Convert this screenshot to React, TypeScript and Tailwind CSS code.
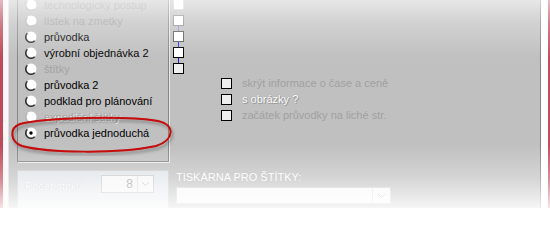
import React from 'react'

// ─── Small Win9x-style controls ───────────────────────────────────────────

function Radio({ checked, faint }: { checked?: boolean; faint?: boolean }) {
  return (
    <svg width="12" height="12" viewBox="0 0 12 12" className="shrink-0" aria-hidden="true">
      <circle cx="6" cy="6" r="5.5" fill="#fff" />
      <path d="M2.3 2.3A5.2 5.2 0 0 0 9.7 9.7" fill="none" stroke={faint ? '#b4b4b4' : '#303030'} strokeWidth="1.6" />
      {checked && <circle cx="6" cy="6" r="1.7" fill="#000" />}
    </svg>
  )
}

const reports = [
  { label: 'technologický postup', state: 'faint' },
  { label: 'lístek na zmetky', state: 'faint' },
  { label: 'průvodka', state: 'on' },
  { label: 'výrobní objednávka 2', state: 'on' },
  { label: 'štítky', state: 'off' },
  { label: 'průvodka 2', state: 'on' },
  { label: 'podklad pro plánování', state: 'on' },
  { label: 'expediční štítky', state: 'emboss' },
  { label: 'průvodka jednoduchá', state: 'on', checked: true },
]

const options = [
  { label: 'skrýt informace o čase a ceně', emboss: false },
  { label: 's obrázky ?', emboss: true },
  { label: 'začátek průvodky na liché str.', emboss: false },
]

function Chevron() {
  return (
    <svg width="9" height="6" viewBox="0 0 9 6" aria-hidden="true">
      <path d="M1 1l3.5 3.5L8 1" fill="none" stroke="#c4c4c4" strokeWidth="1" />
    </svg>
  )
}

export default function App() {
  return (
    <div className="relative w-[550px] h-[208px] overflow-hidden flex bg-white font-['Liberation_Sans',Arial,sans-serif] text-[11px] leading-[13px]">
      {/* window frame edges */}
      <div className="w-[3px] bg-[#bc4a58]" />
      <div className="w-[5px] bg-[#fbf6f7]" />

      <div className="w-[533px] bg-[#c0c0c0] border-l border-[#dedede] border-r border-r-[#868686] flex flex-col">
        <div className="flex items-start -mt-[12px]">
          {/* report type group */}
          <div className="ml-[8px] w-[152px] border border-[#868686] shadow-[1px_1px_0_#e8e8e8] pt-[8px] pb-[20px] pl-[7px]">
            {reports.map((r) => (
              <div key={r.label} className="h-4 flex items-center">
                <Radio checked={r.checked} faint={r.state === 'faint' || r.state === 'emboss'} />
                <span
                  className={
                    'ml-[7px] whitespace-nowrap ' +
                    (r.state === 'on'
                      ? 'text-black'
                      : r.state === 'emboss'
                        ? 'text-[#a4a4a4] [text-shadow:1px_1px_0_#ececec]'
                        : 'text-[#a2a2a2]')
                  }
                >
                  {r.label}
                </span>
              </div>
            ))}
          </div>

          {/* linked check chain */}
          <div className="ml-[4px] mt-[11px] flex flex-col items-center w-[11px]">
            <div className="w-[11px] h-[11px] border border-[#cfcfcf] bg-white" />
            <div className="w-px h-[5px] bg-[#c8c8e4]" />
            <div className="w-[11px] h-[11px] border border-[#8e8e8e] bg-white" />
            <div className="w-px h-[5px] bg-[#8a8aec]" />
            <div className="w-[11px] h-[11px] border border-[#5a5a5a] bg-white" />
            <div className="w-px h-[5px] bg-[#3030f0]" />
            <div className="w-[11px] h-[11px] border border-black bg-white" />
            <div className="w-px h-[5px] bg-[#2020c0]" />
            <div className="w-[11px] h-[11px] border border-black bg-[#efefef]" />
          </div>

          {/* print options */}
          <div className="ml-[37px] mt-[87px] flex flex-col">
            {options.map((o) => (
              <div key={o.label} className="h-4 flex items-center">
                <div className="w-[11px] h-[11px] border border-black bg-[#efefef] shrink-0" />
                <span
                  className={
                    'ml-[10px] whitespace-nowrap ' +
                    (o.emboss ? 'text-white [text-shadow:0_0_1px_#8a8a8a,1px_1px_0_#9a9a9a]' : 'text-[#a0a0a0]')
                  }
                >
                  {o.label}
                </span>
              </div>
            ))}
          </div>
        </div>

        <div className="flex items-start mt-[8px]">
          {/* label count */}
          <div className="ml-[8px] w-[152px] h-[60px] border border-[#cacaca] bg-[linear-gradient(to_bottom,#dfe3e8,#f4f5f7)] flex justify-between pl-[7px] pr-[14px] pt-[4px]">
            <span className="mt-[5px] text-white [text-shadow:0_0_1px_#a8a8a8]">Počet štítků:</span>
            <div className="w-[53px] h-[18px] border border-[#c8c8c8] bg-[#f6f6f6] flex">
              <span className="flex-1 text-right pr-[4px] pt-[2px] text-[#9a9a9a] text-[12px]">8</span>
              <div className="w-[16px] border-l border-[#dcdcdc] flex items-center justify-center">
                <Chevron />
              </div>
            </div>
          </div>

          {/* printer */}
          <div className="ml-[7px] flex flex-col">
            <span className="mt-[1px] text-white [text-shadow:0_0_1px_#a8a8a8] whitespace-nowrap">TISKÁRNA PRO ŠTÍTKY:</span>
            <div className="mt-[3px] w-[215px] h-[17px] border border-[#d0d0d0] bg-[#f8f8f8] flex justify-end">
              <div className="w-[18px] border-l border-[#e2e2e2] flex items-center justify-center">
                <Chevron />
              </div>
            </div>
          </div>
        </div>
      </div>

      <div className="w-[7px] bg-white" />
      <div className="w-[2px] bg-[#c05060]" />

      {/* screenshot vignette */}
      <div className="pointer-events-none absolute inset-0 bg-[linear-gradient(to_bottom,rgba(255,255,255,0.62)_0%,rgba(255,255,255,0.28)_11%,rgba(255,255,255,0)_28%,rgba(255,255,255,0)_70%,rgba(255,255,255,0.35)_86%,rgba(255,255,255,0.85)_100%)]" />

      {/* hand-drawn highlight ellipse */}
      <svg className="pointer-events-none absolute left-[8px] top-[116px]" width="168" height="40" viewBox="0 0 168 40" aria-hidden="true">
        <defs>
          <filter id="sh" x="-10%" y="-30%" width="120%" height="160%">
            <feDropShadow dx="1.5" dy="2.5" stdDeviation="1.5" floodColor="#000" floodOpacity="0.35" />
          </filter>
        </defs>
        <path
          d="M12 8C40 1 120 0 150 5C168 9 166 24 148 30C110 38 40 37 14 30C2 26 1 12 12 8Z"
          fill="none"
          stroke="#c40808"
          strokeWidth="2"
          filter="url(#sh)"
        />
      </svg>
    </div>
  )
}
